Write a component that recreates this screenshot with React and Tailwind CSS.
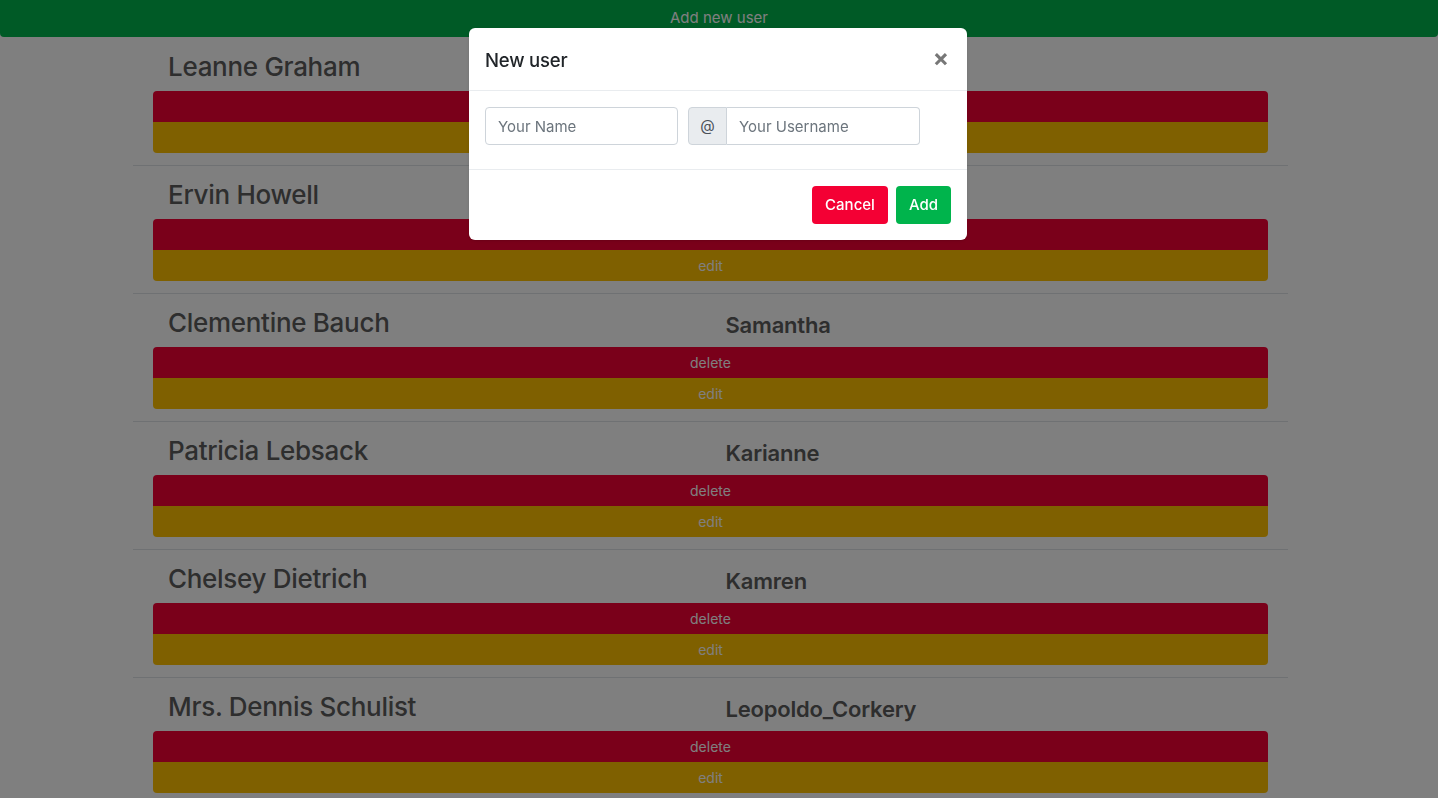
import React, { useState } from 'react';

const users = [
  { name: 'Leanne Graham', username: 'Bret' },
  { name: 'Ervin Howell', username: 'Antonette' },
  { name: 'Clementine Bauch', username: 'Samantha' },
  { name: 'Patricia Lebsack', username: 'Karianne' },
  { name: 'Chelsey Dietrich', username: 'Kamren' },
  { name: 'Mrs. Dennis Schulist', username: 'Leopoldo_Corkery' },
  { name: 'Kurtis Weissnat', username: 'Elwyn.Skiles' },
  { name: 'Nicholas Runolfsdottir V', username: 'Maxime_Nienow' },
  { name: 'Glenna Reichert', username: 'Delphine' },
  { name: 'Clementina DuBuque', username: 'Moriah.Stanton' },
];

const UserRow = ({ user }) => (
  <div className="border-b border-[#dee2e6] pt-3 pb-3 px-5">
    <div className="flex h-[34px] mb-[7px]">
      <h3 className="w-1/2 px-[15px] text-[26px] leading-[34px] font-medium tracking-[-0.3px] text-[#5c5c5c]">{user.name}</h3>
      <h4 className="w-1/2 px-[15px] text-[22px] leading-[38px] font-semibold tracking-[-0.2px] text-[#5c5c5c]">{user.username}</h4>
    </div>
    <button className="block w-full h-[31px] bg-[#f40034] text-white text-sm rounded-t-[4px]">delete</button>
    <button className="block w-full h-[31px] bg-[#ffc000] text-white text-sm rounded-b-[4px]">edit</button>
  </div>
);

const App = () => {
  const [name, setName] = useState('');
  const [username, setUsername] = useState('');

  return (
    <div className="min-h-screen bg-white font-['Inter','Liberation_Sans',sans-serif]">
      <button className="block w-full h-[37px] bg-[#00b44c] text-white text-[15px] rounded-b-[4px]">Add new user</button>
      <div className="pr-[17px] pt-px">
        <div className="w-[1155px] mx-auto">
          {users.map((u) => (
            <UserRow key={u.username} user={u} />
          ))}
        </div>
      </div>

      <div className="fixed inset-0 bg-black/50" />

      <div className="fixed left-[469px] top-[28px] w-[498px] bg-white rounded-[6px] shadow-sm">
        <div className="flex items-center justify-between h-[63px] px-4 border-b border-[#e9ecef]">
          <h5 className="pt-[3px] text-[18.5px] font-medium text-[#212529] tracking-[-0.2px]">New user</h5>
          <button className="text-[#777] text-[24px] font-bold leading-none pr-[2px] pb-[3px]">×</button>
        </div>
        <div className="flex items-center gap-[10px] px-4 pt-4 pb-6 border-b border-[#e9ecef]">
          <input
            className="w-[193px] h-[38px] px-3 border border-[#ced4da] rounded-[4px] text-[15px] text-[#495057] placeholder-[#6c757d] outline-none"
            placeholder="Your Name"
            value={name}
            onChange={(e) => setName(e.target.value)}
          />
          <div className="flex h-[38px]">
            <span className="w-[39px] flex items-center justify-center bg-[#e9ecef] border border-[#ced4da] rounded-l-[4px] text-[15px] text-[#495057]">@</span>
            <input
              className="w-[193px] h-[38px] px-3 border border-l-0 border-[#ced4da] rounded-r-[4px] text-[15px] text-[#495057] placeholder-[#6c757d] outline-none"
              placeholder="Your Username"
              value={username}
              onChange={(e) => setUsername(e.target.value)}
            />
          </div>
        </div>
        <div className="flex justify-end items-center gap-2 h-[70px] px-4">
          <button className="h-[38px] w-[76px] bg-[#f40034] text-white text-[15px] font-medium rounded-[4px]">Cancel</button>
          <button className="h-[38px] w-[55px] bg-[#00b44c] text-white text-[15px] font-medium rounded-[4px]">Add</button>
        </div>
      </div>
    </div>
  );
};

export default App;
